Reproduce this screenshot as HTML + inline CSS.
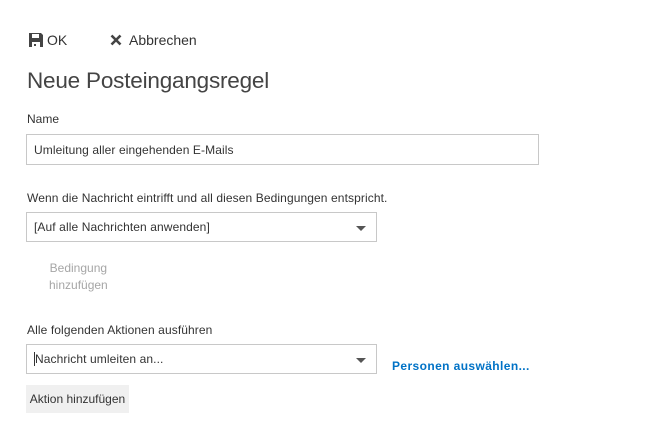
<!DOCTYPE html>
<html><head><meta charset="utf-8"><style>
*{margin:0;padding:0;box-sizing:border-box}
body{width:651px;height:432px;background:#fff;font-family:"Liberation Sans",sans-serif;color:#333;position:relative;overflow:hidden}
.a{position:absolute;white-space:nowrap}
.box{position:absolute;border:1px solid #c8c8c8;background:#fff;font-size:12px;color:#333;padding-left:7px;display:flex;align-items:center;letter-spacing:0.1px}
.arr{position:absolute;right:10px;top:13px;width:0;height:0;border-left:5px solid transparent;border-right:5px solid transparent;border-top:5px solid #555}
</style></head><body>
<svg class="a" style="left:29px;top:33px" width="14" height="14" viewBox="0 0 14 14"><path d="M0 0H12L14 2V14H0Z" fill="#444"/><rect x="3" y="1" width="7" height="4" fill="#fff"/><rect x="3" y="9" width="8" height="5" fill="#fff"/><rect x="5" y="11" width="2" height="2" fill="#444"/></svg>
<div class="a" style="left:47px;top:32px;font-size:14px;color:#333">OK</div>
<svg class="a" style="left:110px;top:34px" width="12" height="12" viewBox="0 0 12 12"><path d="M1.5 1.5L10.5 10.5M10.5 1.5L1.5 10.5" stroke="#444" stroke-width="2.6"/></svg>
<div class="a" style="left:129px;top:32px;font-size:14px;color:#333">Abbrechen</div>
<div class="a" style="left:27px;top:68px;font-size:22.5px;color:#444;letter-spacing:-0.2px">Neue Posteingangsregel</div>
<div class="a" style="left:27px;top:112px;font-size:12px">Name</div>
<div class="box" style="left:26px;top:134px;width:513px;height:31px">Umleitung aller eingehenden E-Mails</div>
<div class="a" style="left:27px;top:191px;font-size:12px;letter-spacing:0.1px">Wenn die Nachricht eintrifft und all diesen Bedingungen entspricht.</div>
<div class="box" style="left:26px;top:212px;width:351px;height:30px">[Auf alle Nachrichten anwenden]<span class="arr"></span></div>
<div class="a" style="left:49px;top:260px;font-size:12px;color:#a6a6a6;line-height:17px;text-align:center">Bedingung<br>hinzufügen</div>
<div class="a" style="left:27px;top:323px;font-size:12px;letter-spacing:0.1px">Alle folgenden Aktionen ausführen</div>
<div class="box" style="left:26px;top:344px;width:351px;height:30px"><span style="border-left:1px solid #333;height:14px"></span>Nachricht umleiten an...<span class="arr"></span></div>
<div class="a" style="left:392px;top:359px;font-size:12px;font-weight:bold;color:#0072c6;letter-spacing:0.4px">Personen auswählen...</div>
<div class="a" style="left:26px;top:385px;width:103px;height:28px;background:#f0f0f0;font-size:12px;line-height:28px;text-align:center;color:#333">Aktion hinzufügen</div>
</body></html>
